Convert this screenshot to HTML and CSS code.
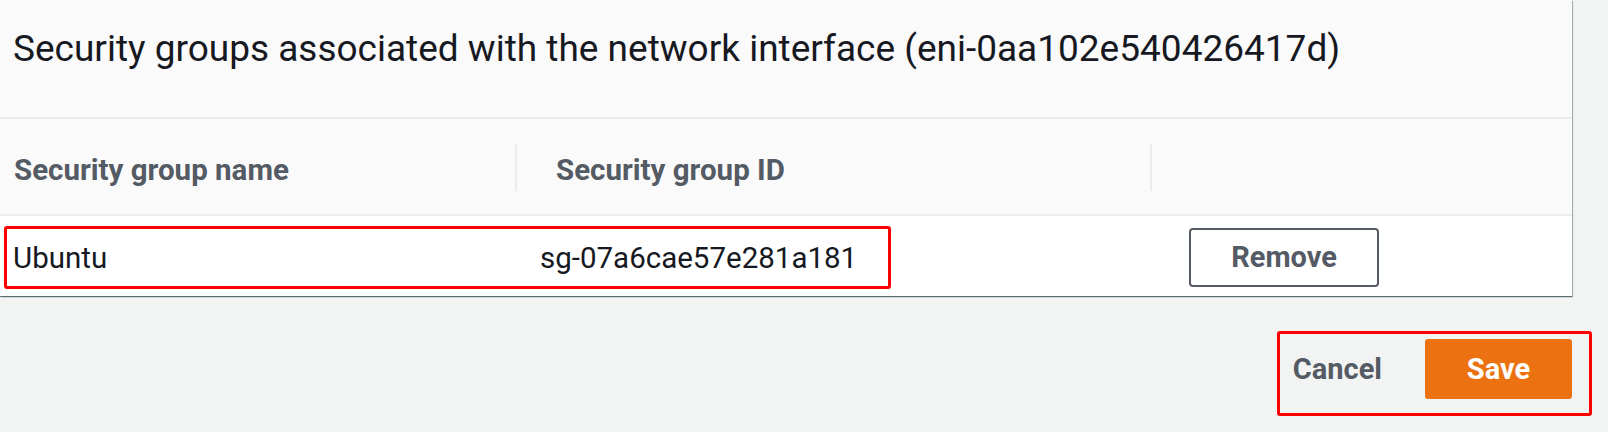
FILE: index.html
```html
<!DOCTYPE html>
<html lang="en">
<head>
<meta charset="utf-8">
<title>Security groups</title>
<link rel="stylesheet" href="styles.css">
</head>
<body>
<div class="page">
  <section class="panel">
    <header class="panel-header">
      <h2 class="panel-title">Security groups associated with the network interface (eni-0aa102e540426417d)</h2>
    </header>
    <div class="table">
      <div class="thead">
        <div class="th th-first">Security group name</div>
        <div class="th th-div">Security group ID</div>
        <div class="th th-div"></div>
      </div>
      <div class="trow">
        <div class="td td-name">Ubuntu</div>
        <div class="td td-id">sg-07a6cae57e281a181</div>
        <div class="td td-act"><button class="btn-remove">Remove</button></div>
        <div class="mark mark-row"></div>
      </div>
    </div>
  </section>
  <footer class="actions">
    <button class="btn-link">Cancel</button>
    <button class="btn-primary">Save</button>
    <div class="mark mark-actions"></div>
  </footer>
</div>
</body>
</html>
```
FILE: styles.css
```css
html, body {
  margin: 0;
  padding: 0;
}
body {
  background: #f2f3f3;
  font-family: "Roboto", "Noto Sans", sans-serif;
  color: #16191f;
  width: 1608px;
  height: 432px;
  overflow: hidden;
}
.page {
  display: flex;
  flex-direction: column;
}
.panel {
  width: 1572px;
  background: #ffffff;
  box-shadow: 0 1px 1px 0 rgba(0, 28, 36, 0.5), 1px 1px 1px 0 rgba(0, 28, 36, 0.25);
}
.panel-header {
  height: 119px;
  background: #fafafa;
  border-bottom: 2px solid #eaeded;
  box-sizing: border-box;
  padding-left: 13px;
  padding-top: 27px;
}
.panel-title {
  margin: 0;
  font-size: 37px;
  line-height: 44px;
  font-weight: 400;
  color: #16191f;
  white-space: nowrap;
}
.thead {
  display: grid;
  grid-template-columns: 515px 635px 1fr;
  height: 97px;
  background: #fafafa;
  border-bottom: 2px solid #eaeded;
  box-sizing: border-box;
  align-items: center;
  padding-top: 2px;
}
.th {
  font-weight: 700;
  font-size: 29.5px;
  color: #545b64;
  height: 47px;
  display: flex;
  align-items: center;
  padding-top: 5px;
  box-sizing: border-box;
}
.th-first {
  padding-left: 14px;
}
.th-div {
  border-left: 2px solid #eaeded;
  padding-left: 39px;
}
.trow {
  position: relative;
  display: grid;
  grid-template-columns: 515px 635px 1fr;
  height: 80px;
  box-sizing: border-box;
  padding-top: 2px;
  align-items: center;
}
.td {
  font-size: 29.5px;
  color: #16191f;
  padding-top: 2px;
}
.td-name {
  padding-left: 13px;
}
.td-id {
  padding-left: 25px;
}
.td-act {
  padding-left: 39px;
  padding-top: 0;
  display: flex;
}
.btn-remove {
  width: 190px;
  height: 59px;
  background: #ffffff;
  border: 2px solid #545b64;
  border-radius: 4px;
  font-family: inherit;
  font-weight: 700;
  font-size: 29px;
  color: #545b64;
  padding: 0;
}
.actions {
  position: relative;
  display: flex;
  justify-content: flex-end;
  align-items: center;
  gap: 43px;
  padding-right: 36px;
  margin-top: 43px;
}
.btn-link {
  background: none;
  border: none;
  padding: 0;
  font-family: inherit;
  font-weight: 700;
  font-size: 29px;
  color: #545b64;
}
.btn-primary {
  width: 147px;
  height: 60px;
  background: #ec7211;
  border: none;
  border-radius: 3px;
  font-family: inherit;
  font-weight: 700;
  font-size: 29px;
  color: #ffffff;
  padding: 0;
}
.mark {
  position: absolute;
  border: 3px solid #ff0000;
  border-radius: 3px;
  box-sizing: border-box;
  pointer-events: none;
}
.mark-row {
  left: 4px;
  top: 10px;
  width: 887px;
  height: 63px;
}
.mark-actions {
  right: 16px;
  top: -8px;
  width: 315px;
  height: 85px;
}
```
